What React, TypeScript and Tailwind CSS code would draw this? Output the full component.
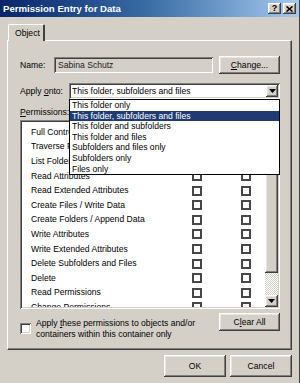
import React from 'react';

const raised =
  'bg-[#d4d0c8] shadow-[inset_-1px_-1px_#404040,inset_1px_1px_#ffffff,inset_-2px_-2px_#808080,inset_2px_2px_#e8e6e1]';
const sunken =
  'shadow-[inset_1px_1px_#808080,inset_-1px_-1px_#ffffff,inset_2px_2px_#404040,inset_-2px_-2px_#d4d0c8]';

const permissions = [
  'Full Control',
  'Traverse Folder / Execute File',
  'List Folder / Read Data',
  'Read Attributes',
  'Read Extended Attributes',
  'Create Files / Write Data',
  'Create Folders / Append Data',
  'Write Attributes',
  'Write Extended Attributes',
  'Delete Subfolders and Files',
  'Delete',
  'Read Permissions',
  'Change Permissions',
  'Take Ownership',
];

const applyOptions = [
  'This folder only',
  'This folder, subfolders and files',
  'This folder and subfolders',
  'This folder and files',
  'Subfolders and files only',
  'Subfolders only',
  'Files only',
];

const Box = () => <div className="w-[10px] h-[10px] border-2 border-[#474747] bg-white" />;

const Arrow = () => (
  <svg width="7" height="4" viewBox="0 0 7 4">
    <path d="M0 0h7L3.5 4z" fill="#000" />
  </svg>
);

export default function App() {
  return (
    <div
      className="w-[300px] h-[383px] bg-[#d4d0c8] overflow-hidden border-r border-[#404040] text-black"
      style={{ fontFamily: '"Liberation Sans", Arial, sans-serif' }}
    >
      {/* Title bar */}
      <div className="h-[17px] flex items-center bg-linear-to-r from-[#0a246a] via-[#3a6ea5] to-[#a6caf0] pl-[3px] pr-[3px]">
        <span className="text-white font-bold text-[9.6px] leading-none flex-1">Permission Entry for Data</span>
        <div className="flex gap-[2px]">
          <div className={`${raised} w-[13px] h-[11px] flex items-center justify-center text-[9px] font-bold leading-none`}>?</div>
          <div className={`${raised} w-[13px] h-[11px] flex items-center justify-center`}>
            <svg width="7" height="6" viewBox="0 0 7 6">
              <path d="M0.5 0.5l6 5M6.5 0.5l-6 5" stroke="#000" strokeWidth="1.6" />
            </svg>
          </div>
        </div>
      </div>

      <div className="px-[7px] text-[8.6px]">
        {/* Tab */}
        <div className="mt-[7px] h-[16px] flex pl-[1px]">
          <div className="w-[37px] h-[17px] border-l border-t border-white border-r-2 border-r-[#404040] rounded-t-[2px] bg-[#d4d0c8] flex items-center pl-[6px] z-10">
            Object
          </div>
        </div>

        {/* Panel */}
        <div className="h-[310px] border-l border-t border-white border-r border-b border-r-[#404040] border-b-[#404040] shadow-[inset_-1px_-1px_#808080] pl-[12px] pr-[11px]">
          {/* Name row */}
          <div className="mt-[15px] h-[18px] flex items-center">
            <span className="w-[34px]">Name:</span>
            <div className={`${sunken} w-[159px] h-[16px] flex items-center pl-[4px] text-[#222]`}>Sabina Schutz</div>
            <div className={`${raised} ml-[6px] w-[61px] h-[18px] flex items-center justify-center`}>
              <span><u>C</u>hange...</span>
            </div>
          </div>

          {/* Apply onto */}
          <div className="mt-[9px] h-[16px] flex items-center">
            <span className="w-[49px]">Apply <u>o</u>nto:</span>
            <div className="relative flex-1 h-[16px]">
              <div className={`${sunken} bg-white h-full flex items-center pl-[3px] pr-[2px]`}>
                <span className="flex-1">This folder, subfolders and files</span>
                <div className={`${raised} w-[12px] h-[12px] flex items-center justify-center`}>
                  <Arrow />
                </div>
              </div>
              <div className="absolute left-0 right-0 top-full bg-white border border-black z-20">
                {applyOptions.map((o, i) => (
                  <div
                    key={o}
                    className={`h-[10.6px] leading-[10.6px] pl-[2px] ${i === 1 ? 'bg-[#1f3b72] text-white' : ''}`}
                  >
                    {o}
                  </div>
                ))}
              </div>
            </div>
          </div>

          {/* Permissions label */}
          <div className="mt-[7px] h-[12px] leading-[12px]">
            <u>P</u>ermissions:
          </div>

          {/* Permission list */}
          <div className={`${sunken} bg-white mt-[2px] h-[189px] flex p-[2px]`}>
            <div className="flex-1 overflow-hidden pt-[3px]">
              {permissions.map((p) => (
                <div key={p} className="h-[14.6px] flex items-center pl-[9px]">
                  <span className="w-[161px] whitespace-nowrap overflow-hidden">{p}</span>
                  <Box />
                  <div className="w-[39px]" />
                  <Box />
                </div>
              ))}
            </div>
            {/* Scrollbar */}
            <div className="w-[13px] flex flex-col">
              <div className={`${raised} h-[13px]`} />
              <div className={`${raised} flex-1`} />
              <div className="h-[22px] bg-[repeating-conic-gradient(#ffffff_0_25%,#d4d0c8_0_50%)] bg-[length:2px_2px]" />
              <div className={`${raised} h-[12px] flex items-center justify-center`}>
                <Arrow />
              </div>
            </div>
          </div>

          {/* Bottom row */}
          <div className="mt-[4px] flex">
            <div className="flex flex-1 pt-[5px]">
              <div className={`${sunken} bg-white w-[11px] h-[11px] mt-[5px] shrink-0`} />
              <div className="ml-[5px] leading-[10.5px] whitespace-nowrap">
                Apply <u>t</u>hese permissions to objects and/or
                <br />
                containers within this container only
              </div>
            </div>
            <div className={`${raised} w-[61px] h-[18px] flex items-center justify-center`}>
              <span>C<u>l</u>ear All</span>
            </div>
          </div>
        </div>

        {/* Dialog buttons */}
        <div className="mt-[5px] flex justify-end gap-[4px]">
          <div className={`${raised} w-[62px] h-[22px] flex items-center justify-center`}>OK</div>
          <div className={`${raised} w-[62px] h-[22px] flex items-center justify-center`}>Cancel</div>
        </div>
      </div>
    </div>
  );
}
